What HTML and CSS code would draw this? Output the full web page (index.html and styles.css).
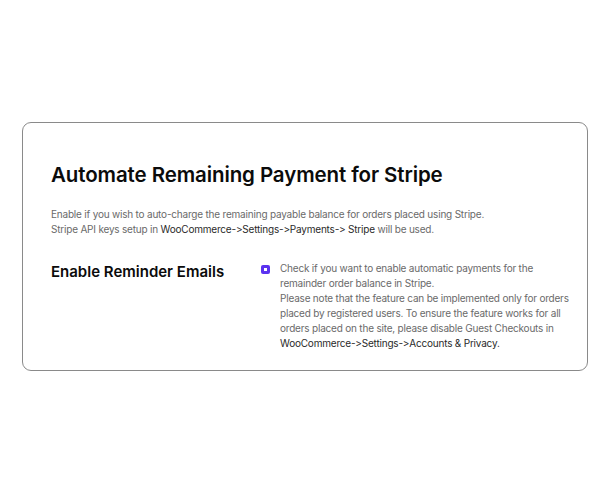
FILE: index.html
```html
<!DOCTYPE html>
<html>
<head>
<meta charset="utf-8">
<link rel="stylesheet" href="styles.css">
</head>
<body>
<div class="page">
  <section class="card">
    <h1 class="title">Automate Remaining Payment for Stripe</h1>
    <p class="desc">Enable if you wish to auto-charge the remaining payable balance for orders placed using Stripe.<br>Stripe API keys setup in <span class="dark">WooCommerce-&gt;Settings-&gt;Payments-&gt; Stripe</span> will be used.</p>
    <div class="row">
      <h2 class="label">Enable Reminder Emails</h2>
      <div class="option">
        <span class="check"><span class="check-inner"></span></span>
        <p class="option-text">Check if you want to enable automatic payments for the remainder order balance in Stripe.<br>Please note that the feature can be implemented only for orders placed by registered users. To ensure the feature works for all orders placed on the site, please disable Guest Checkouts in <span class="dark">WooCommerce-&gt;Settings-&gt;Accounts &amp; Privacy.</span></p>
      </div>
    </div>
  </section>
</div>
</body>
</html>
```
FILE: styles.css
```css
html, body {
  margin: 0;
  padding: 0;
  background: #ffffff;
}
body {
  font-family: Inter, "Noto Sans", sans-serif;
  font-feature-settings: "calt" 0, "liga" 0;
  font-variant-ligatures: none;
  color: #111;
}
.page {
  padding: 122px 22px 0 22px;
  width: 566px;
}
.card {
  box-sizing: border-box;
  width: 566px;
  height: 249px;
  border: 1px solid #8a8a8a;
  border-radius: 9px;
  padding: 38px 14px 0 28px;
}
.title {
  margin: 0;
  font-size: 20.5px;
  font-weight: 600;
  line-height: 28px;
  letter-spacing: -0.1px;
  color: #0b0b0b;
}
.desc {
  margin: 18px 0 0 0;
  font-size: 10px;
  letter-spacing: -0.2px;
  line-height: 15px;
  color: #6a6a6a;
}
.dark { color: #2a2a2a; }
.row {
  display: flex;
  margin-top: 24px;
}
.label {
  flex: none;
  margin: 0;
  width: 210px;
  font-size: 15px;
  font-weight: 600;
  line-height: 22px;
  color: #0b0b0b;
}
.option {
  flex: 1;
  display: flex;
  align-items: flex-start;
}
.check {
  box-sizing: border-box;
  flex: none;
  width: 9px;
  height: 9px;
  margin-top: 4px;
  margin-right: 10px;
  border-radius: 2px;
  background: #5b32f0;
  display: flex;
  align-items: center;
  justify-content: center;
}
.check-inner {
  width: 3px;
  height: 3px;
  background: #fff;
}
.option-text {
  margin: 0;
  width: 292px;
  font-size: 10px;
  letter-spacing: -0.2px;
  line-height: 15px;
  color: #6a6a6a;
}
```
